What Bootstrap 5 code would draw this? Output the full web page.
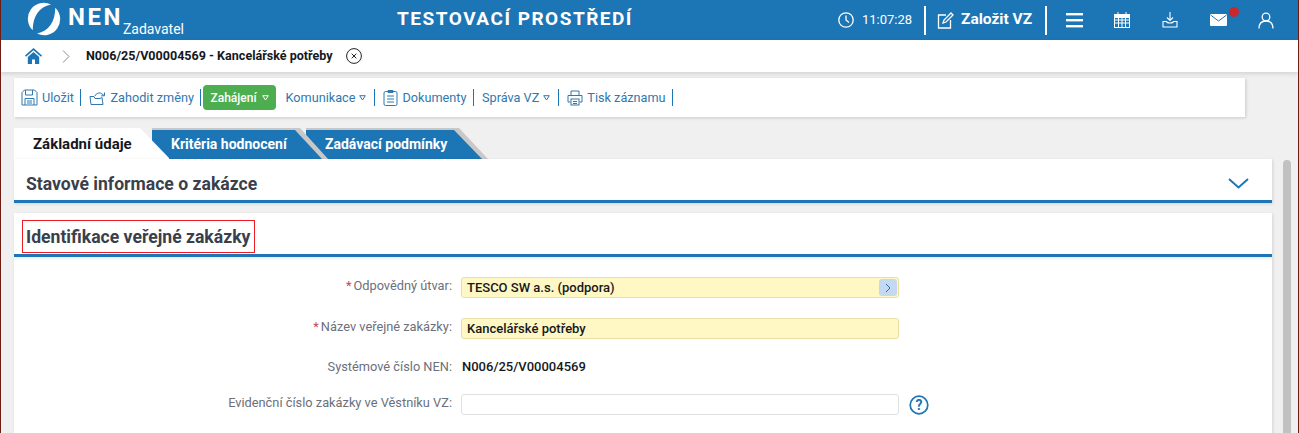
<!DOCTYPE html>
<html lang="cs">
<head>
<meta charset="UTF-8">
<title>NEN Zadavatel</title>
<link rel="stylesheet" href="https://cdn.jsdelivr.net/npm/bootstrap@5.3.0/dist/css/bootstrap.min.css">
<style>
html, body { height: 100%; overflow: hidden; }
body { font-family: Roboto, "Liberation Sans", sans-serif; font-size: 13px; background: #f0f0f0; border-left: 1px solid #6e1c14; border-right: 1px solid #6e1c14; color: #3a3f4b; }
svg { display: block; flex: none; }
.top-bar { height: 40px; background: #1c75b5; color: #fff; }
.logo-box { width: 395px; padding-left: 26px; }
.logo-mark { margin-top: -3px; }
.logo-nen { font-size: 24px; font-weight: 700; letter-spacing: 2.500px; line-height: 1; margin-left: 7px; margin-top: -7px; }
.logo-role { font-size: 14px; line-height: 1; margin-left: 0; margin-top: 17px; }
.env-title { width: 238px; text-align: center; font-size: 19px; font-weight: 700; letter-spacing: 1.500px; white-space: nowrap; margin-top: -2px; }
.top-right { margin-left: 204px; }
.clock-time { font-size: 13px; margin-left: 8px; margin-right: 12px; width: 50px; white-space: nowrap; }
.top-sep { width: 2px; height: 29px; background: #fff; }
.new-btn { font-size: 15.500px; font-weight: 700; padding: 0 13px 0 11px; gap: 7px; white-space: nowrap; }
.top-ic { width: 48px; }
.top-first { margin-left: 3px; }
.dot-new { position: absolute; width: 10px; height: 10px; border-radius: 50%; background: #c9282d; top: -7px; left: 19px; }
.crumb-bar { height: 32px; background: #fff; box-shadow: 0 2px 4px rgba(0,0,0,.12); padding-left: 24px; position: relative; }
.crumb-arrow { margin-left: 20px; }
.crumb-title { font-size: 12.550px; font-weight: 700; color: #15181d; margin-left: 16px; white-space: nowrap; }
.crumb-close { width: 16px; height: 16px; margin-left: 13px; }
.work-area { height: 361px; overflow: hidden; }
.work-col { width: 1258px; margin-left: 13px; }
.tool-bar { width: 1231px; height: 39px; margin-top: 6px; background: #fff; box-shadow: 1px 1px 3px rgba(0,0,0,.16); padding-left: 7px; color: #2f78b0; }
.tool-item { font-size: 12.700px; white-space: nowrap; gap: 4px; padding-right: 6.500px; margin-right: 8px; border-right: 1px solid #1c75b5; height: 17px; }
.tool-menu { padding-right: 8px; }
.tool-green { background: #4cae4f; color: #fff; font-weight: 500; border-radius: 4px; height: 25px; padding: 0 7px; margin-left: -6px; margin-right: 10px; font-size: 12px; border: 0; gap: 5px; }
.tool-arrow { width: 7px; height: 6px; }
.tab-row { height: 31px; margin-top: 11px; }
.tab-cut { height: 31px; position: relative; font-weight: 700; white-space: nowrap; }
.tab-on { width: 155px; background: #fff; color: #15181d; font-size: 15px; clip-path: polygon(0 0, 126px 0, 156px 31px, 0 31px); padding: 1px 0 0 19px; z-index: 3; margin-right: -17px; }
.tab-off { background: #c8c8c8; padding-top: 2px; font-size: 14px; }
.tab-off-in { height: 100%; background: #1c75b5; color: #fff; padding-left: 19px; }
.tab-two { width: 176px; clip-path: polygon(0 0, 148px 0, 176px 31px, 0 31px); z-index: 2; margin-right: -22px; }
.tab-two .tab-off-in { clip-path: polygon(0 0, 143px 0, 170px 29px, 0 29px); }
.tab-three { width: 182px; clip-path: polygon(0 0, 153px 0, 182px 31px, 0 31px); z-index: 1; }
.tab-three .tab-off-in { clip-path: polygon(0 0, 148px 0, 176px 29px, 0 29px); }
.sec-head { background: #fff; border-bottom: 3px solid #1c75b5; box-shadow: 1px 1px 3px rgba(0,0,0,.12); position: relative; z-index: 4; }
.sec-state { height: 44px; padding: 7px 23px 0 12px; }
.sec-state .sec-title { margin-top: 4px; }
.sec-title { font-size: 17.600px; font-weight: 700; color: #3a3f4b; line-height: 1; white-space: nowrap; }
.sec-ident { margin-top: 10px; height: 44px; padding: 7px 0 0 8px; }
.red-box { border: 1px solid #ee1c25; height: 33px; width: 233px; padding: 3px 0 0 3px; }
.form-area { background: #fff; height: 176px; padding-top: 20px; box-shadow: 1px 1px 3px rgba(0,0,0,.12); }
.field-row { height: 21px; margin-bottom: 20px; }
.field-static { height: 16px; margin-bottom: 19px; }
.field-lbl { width: 447px; text-align: right; color: #6c7079; font-size: 12.800px; padding: 0 9px 3px 0; white-space: nowrap; }
.field-static .field-lbl { padding-bottom: 0; }
.req-star { color: #c2465a; margin-right: 2px; }
.field-in { width: 438px; height: 21px; border-radius: 3px; border: 1px solid #e0e0e0; background: #fff; padding: 0 5px; color: #15181d; font-size: 13px; font-weight: 500; }
.field-req { background: #fff7c4; border-color: #e8dfa6; }
.pick-btn { width: 18px; height: 17px; background: #c3d9f2; border-radius: 3px; margin-left: auto; margin-right: -4px; }
.field-val { color: #15181d; font-size: 13px; font-weight: 500; margin-left: 1px; }
.help-ic { margin-left: 10px; }
.scroll-track { width: 8px; height: 273px; margin: 88px 0 0 11px; background: #c1c1c1; border-radius: 4px 4px 0 0; }
</style>
</head>
<body>

<!-- top bar -->
<div class="top-bar d-flex align-items-center">
  <div class="logo-box d-flex align-items-center">
    <svg class="logo-mark" width="34" height="34" viewBox="0 0 34 34" fill="#fff">
      <path d="M24 2.500A16 16 0 0 0 5.700 28.300C6 14 12 5 24 2.500z"/>
      <path d="M10 31.500A16 16 0 0 0 28.300 5.700C28 20 22 29 10 31.500z"/>
    </svg>
    <span class="logo-nen">NEN</span>
    <span class="logo-role">Zadavatel</span>
  </div>
  <div class="env-title">TESTOVACÍ PROSTŘEDÍ</div>
  <div class="top-right d-flex align-items-center">
    <svg width="16" height="16" viewBox="0 0 16 16" fill="none" stroke="#fff" stroke-width="1.300"><circle cx="8" cy="8" r="7.200"/><path d="M8 3.500V8l3 2.500"/></svg>
    <span class="clock-time">11:07:28</span>
    <div class="top-sep"></div>
    <div class="new-btn d-flex align-items-center">
      <svg width="17" height="17" viewBox="0 0 17 17" fill="none" stroke="#fff" stroke-width="1.300"><path d="M9 3H1.500v13h12V8"/><path d="M6 11l1-3 7-7 2 2-7 7z"/></svg>
      <span>Založit VZ</span>
    </div>
    <div class="top-sep"></div>
    <div class="top-ic top-first d-flex justify-content-center">
      <svg width="17" height="15" viewBox="0 0 17 15" fill="#fff"><rect y="0" width="17" height="2.400"/><rect y="6" width="17" height="2.400"/><rect y="12" width="17" height="2.400"/></svg>
    </div>
    <div class="top-ic d-flex justify-content-center">
      <svg width="16" height="16" viewBox="0 0 16 16" fill="none" stroke="#fff"><rect x=".5" y="2.500" width="15" height="13"/><rect x="1" y="2.500" width="14" height="3" fill="#fff"/><path d="M4 0v3M12 0v3M.5 8h15M.5 11h15M4.500 6v9M8 6v9M11.500 6v9"/></svg>
    </div>
    <div class="top-ic d-flex justify-content-center">
      <svg width="16" height="16" viewBox="0 0 16 16" fill="none" stroke="#fff" stroke-width="1.100"><path d="M8 0v8M5 5.500L8 8.500l3-3"/><path d="M1 9.500h3.500c.5 2 6.500 2 7 0H15V15H1z"/></svg>
    </div>
    <div class="top-ic d-flex justify-content-center">
      <div class="position-relative">
        <svg width="17" height="12" viewBox="0 0 17 12"><rect width="17" height="12" rx="1" fill="#fff"/><path d="M.5 1L8.500 7 16.500 1" fill="none" stroke="#1c75b5"/></svg>
        <span class="dot-new"></span>
      </div>
    </div>
    <div class="top-ic d-flex justify-content-center">
      <svg width="16" height="17" viewBox="0 0 16 17" fill="none" stroke="#fff" stroke-width="1.300"><circle cx="8" cy="5" r="3.800"/><path d="M1 16.500c0-5 3-7.500 7-7.500s7 2.500 7 7.500"/></svg>
    </div>
  </div>
</div>

<!-- breadcrumb -->
<div class="crumb-bar d-flex align-items-center">
  <svg width="17" height="16" viewBox="0 0 17 16" fill="#1c75b5"><path d="M8.500 0L0 7.500l1 1.200 7.500-6.500 7.500 6.500 1-1.200z"/><path d="M2.800 9L8.500 4l5.700 5v7H10v-4.500H7V16H2.800z"/></svg>
  <svg class="crumb-arrow" width="8" height="13" viewBox="0 0 8 13" fill="none" stroke="#8a8a8a"><path d="M1 .5l6 6-6 6"/></svg>
  <span class="crumb-title">N006/25/V00004569 - Kancelářské potřeby</span>
  <svg class="crumb-close" viewBox="0 0 16 16" fill="none" stroke="#222"><circle cx="8" cy="8" r="7.400"/><path d="M5.700 5.700l4.600 4.600M10.300 5.700l-4.600 4.600"/></svg>
</div>

<div class="work-area d-flex">
  <div class="work-col">

    <!-- toolbar -->
    <div class="tool-bar d-flex align-items-center">
      <div class="tool-item d-flex align-items-center">
        <svg width="17" height="17" viewBox="0 0 17 17" fill="none" stroke="#2f78b0"><path d="M3.500 1h10l2.500 2.500V16H1V3.500z"/><path d="M4.500 1v5h7V1M4 16v-6.500h9V16M6 12h5M6 14h5"/></svg>
        <span>Uložit</span>
      </div>
      <div class="tool-item d-flex align-items-center">
        <svg width="17" height="14" viewBox="0 0 17 14" fill="none" stroke="#2f78b0"><path d="M1 5.500h4l1 2h5l2-1 1 7H2z"/><path d="M6 5c1-3 5-4 7-2l2 1.500M15.500 1.500v3.300h-3.300"/></svg>
        <span>Zahodit změny</span>
      </div>
      <div class="tool-item tool-green d-flex align-items-center">
        <span>Zahájení</span>
        <svg class="tool-arrow" viewBox="0 0 7 6" fill="none" stroke="#fff"><path d="M.7.7h5.600L3.500 5z"/></svg>
      </div>
      <div class="tool-item tool-menu d-flex align-items-center">
        <span>Komunikace</span>
        <svg class="tool-arrow" viewBox="0 0 7 6" fill="none" stroke="#2f78b0"><path d="M.7.7h5.600L3.500 5z"/></svg>
      </div>
      <div class="tool-item d-flex align-items-center">
        <svg width="15" height="17" viewBox="0 0 15 17" fill="none" stroke="#2f78b0"><rect x="1" y="2.500" width="13" height="14" rx="1.500"/><path d="M5 3.500V1.500h5v2zM4 7h7M4 10h7M4 13h7"/></svg>
        <span>Dokumenty</span>
      </div>
      <div class="tool-item tool-menu d-flex align-items-center">
        <span>Správa VZ</span>
        <svg class="tool-arrow" viewBox="0 0 7 6" fill="none" stroke="#2f78b0"><path d="M.7.7h5.600L3.500 5z"/></svg>
      </div>
      <div class="tool-item d-flex align-items-center">
        <svg width="16" height="16" viewBox="0 0 16 16" fill="none" stroke="#2f78b0"><path d="M4 5V1h8v4M3.500 12H1V5.500h14V12h-2.500"/><rect x="4" y="9" width="8" height="6"/><path d="M6 11.500h4M6 13.500h4"/></svg>
        <span>Tisk záznamu</span>
      </div>
    </div>

    <!-- tabs -->
    <div class="tab-row d-flex">
      <div class="tab-cut tab-on d-flex align-items-center">Základní údaje</div>
      <div class="tab-cut tab-off tab-two"><div class="tab-off-in d-flex align-items-center">Kritéria hodnocení</div></div>
      <div class="tab-cut tab-off tab-three"><div class="tab-off-in d-flex align-items-center">Zadávací podmínky</div></div>
    </div>

    <!-- panels -->
    <div class="sec-head sec-state d-flex align-items-center justify-content-between">
      <span class="sec-title">Stavové informace o zakázce</span>
      <svg width="21" height="11" viewBox="0 0 21 11" fill="none" stroke="#1c75b5" stroke-width="2"><path d="M1 1l9.500 8.500L20 1"/></svg>
    </div>
    <div class="sec-head sec-ident">
      <div class="red-box d-flex align-items-center"><span class="sec-title">Identifikace veřejné zakázky</span></div>
    </div>
    <div class="form-area">
      <div class="field-row d-flex align-items-center">
        <div class="field-lbl"><span class="req-star">*</span>Odpovědný útvar:</div>
        <div class="field-in field-req d-flex align-items-center">
          <span>TESCO SW a.s. (podpora)</span>
          <span class="pick-btn d-flex align-items-center justify-content-center">
            <svg width="6" height="10" viewBox="0 0 6 10" fill="none" stroke="#2f6ea8"><path d="M1 1l4 4-4 4"/></svg>
          </span>
        </div>
      </div>
      <div class="field-row d-flex align-items-center">
        <div class="field-lbl"><span class="req-star">*</span>Název veřejné zakázky:</div>
        <div class="field-in field-req d-flex align-items-center">Kancelářské potřeby</div>
      </div>
      <div class="field-row field-static d-flex align-items-center">
        <div class="field-lbl">Systémové číslo NEN:</div>
        <div class="field-val">N006/25/V00004569</div>
      </div>
      <div class="field-row d-flex align-items-center">
        <div class="field-lbl">Evidenční číslo zakázky ve Věstníku VZ:</div>
        <div class="field-in"></div>
        <svg class="help-ic" width="20" height="20" viewBox="0 0 20 20" fill="none" stroke="#1c75b5"><circle cx="10" cy="10" r="8.800" stroke-width="1.700"/><text x="10" y="15" text-anchor="middle" font-family="Roboto, sans-serif" font-size="14" font-weight="700" fill="#1c75b5" stroke="none">?</text></svg>
      </div>
    </div>
  </div>
  <div class="scroll-track"></div>
</div>

</body>
</html>
